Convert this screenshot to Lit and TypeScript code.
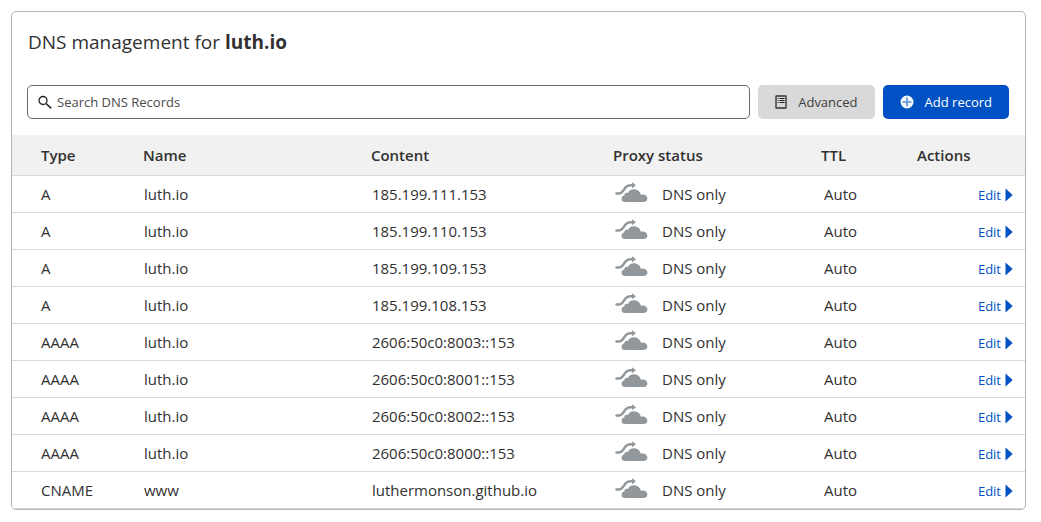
import { LitElement, html, css } from "lit";
import { customElement, property } from "lit/decorators.js";

interface DnsRecord {
  type: string;
  name: string;
  content: string;
}

const RECORDS: DnsRecord[] = [
  { type: "A", name: "luth.io", content: "185.199.111.153" },
  { type: "A", name: "luth.io", content: "185.199.110.153" },
  { type: "A", name: "luth.io", content: "185.199.109.153" },
  { type: "A", name: "luth.io", content: "185.199.108.153" },
  { type: "AAAA", name: "luth.io", content: "2606:50c0:8003::153" },
  { type: "AAAA", name: "luth.io", content: "2606:50c0:8001::153" },
  { type: "AAAA", name: "luth.io", content: "2606:50c0:8002::153" },
  { type: "AAAA", name: "luth.io", content: "2606:50c0:8000::153" },
  { type: "CNAME", name: "www", content: "luthermonson.github.io" },
];

const searchIcon = html`<svg class="search-icon" viewBox="0 0 14 14" width="14" height="14" aria-hidden="true">
  <circle cx="5" cy="5.5" r="4" fill="none" stroke="#222" stroke-width="1.3" />
  <path d="M8 8.5l5.2 4.8" stroke="#222" stroke-width="1.6" fill="none" />
</svg>`;

const listIcon = html`<svg viewBox="0 0 12 14" width="12" height="14" aria-hidden="true">
  <rect x="1" y="1" width="10" height="12" rx="0.6" fill="none" stroke="#5a5a5a" stroke-width="1.8" />
  <path d="M2.5 3.5h1M4.5 3.5h5M2.5 5.5h1M4.5 5.5h5M2.5 7.5h1M4.5 7.5h5" stroke="#222" stroke-width="1" />
</svg>`;

const plusIcon = html`<svg viewBox="0 0 14 14" width="14" height="14" aria-hidden="true">
  <circle cx="7" cy="7" r="6.5" fill="#f4f7fc" />
  <path d="M7 2.5v9M2.5 7h9" stroke="#5a8ed8" stroke-width="1.6" />
</svg>`;

const cloudIcon = html`<svg viewBox="0 0 33 21" width="33" height="21" aria-hidden="true">
  <path
    d="M1.5 11.5H4C6 11.5 6.800 10.600 8 9L10.500 5.600C12 3.700 13 3.200 15 3.200H17.5"
    fill="none" stroke="#92979b" stroke-width="2.5" stroke-linecap="round" />
  <path d="M17 0.2L21 3.2L17 6.2Z" fill="#92979b" />
  <path
    d="M10 20C7.7 20 6.6 18.7 6.6 16.9C6.6 15 7.700 13.800 9.300 13.600C9.300 11.300 11 10.300 12.900 11C13.700 8.600 16 7.200 18.700 7.200C22.500 7.200 25.300 9.500 25.800 12.800C26.400 12.600 27 12.500 27.700 12.500C30.500 12.500 32.400 14.200 32.400 16.500C32.400 18.700 30.800 20 28.500 20Z"
    fill="#92979b" />
</svg>`;

const arrowIcon = html`<svg viewBox="0 0 8 14" width="8" height="14" aria-hidden="true">
  <path d="M0.5 0.5L7.7 7L0.5 13.5Z" fill="#0051c3" />
</svg>`;

@customElement("dns-records-table")
export class DnsRecordsTable extends LitElement {
  @property({ attribute: false }) records: DnsRecord[] = [];

  static styles = css`
    :host {
      display: block;
    }
    .records {
      width: 100%;
      table-layout: fixed;
      border-collapse: collapse;
      font-size: 15px;
      line-height: 20px;
      color: #313131;
    }
    .col-type {
      width: 119px;
    }
    .col-name {
      width: 22.5%;
    }
    .col-proxy {
      width: 208px;
    }
    .col-ttl {
      width: 96px;
    }
    .col-actions {
      width: 120px;
    }
    th {
      height: 40px;
      padding: 0 12px;
      background: #f1f1f1;
      font-weight: 600;
      text-align: left;
      white-space: nowrap;
    }
    td {
      height: 36px;
      padding: 0 12px 0 13px;
      border-top: 1px solid #d9d9d9;
      white-space: nowrap;
    }
    tbody tr:last-child td {
      border-bottom: 1px solid #d9d9d9;
    }
    th:first-child,
    td:first-child {
      padding-left: 29px;
    }
    .ttl {
      padding-left: 15px;
    }
    .proxy {
      display: flex;
      align-items: center;
      gap: 14px;
      padding-left: 1px;
    }
    .proxy svg {
      margin-bottom: 4px;
    }
    .actions {
      text-align: right;
    }
    .edit {
      display: inline-flex;
      align-items: center;
      gap: 4px;
      padding: 0;
      border: 0;
      background: none;
      color: #0051c3;
      font: inherit;
      font-size: 13px;
      cursor: pointer;
      vertical-align: middle;
    }
  `;

  render() {
    return html`
      <table class="records">
        <colgroup>
          <col class="col-type" />
          <col class="col-name" />
          <col />
          <col class="col-proxy" />
          <col class="col-ttl" />
          <col class="col-actions" />
        </colgroup>
        <thead>
          <tr>
            <th scope="col">Type</th>
            <th scope="col">Name</th>
            <th scope="col">Content</th>
            <th scope="col">Proxy status</th>
            <th scope="col">TTL</th>
            <th scope="col">Actions</th>
          </tr>
        </thead>
        <tbody>
          ${this.records.map(
            (r) => html`<tr>
              <td>${r.type}</td>
              <td>${r.name}</td>
              <td>${r.content}</td>
              <td><div class="proxy">${cloudIcon}<span>DNS only</span></div></td>
              <td class="ttl">Auto</td>
              <td class="actions">
                <button class="edit" type="button">Edit${arrowIcon}</button>
              </td>
            </tr>`
          )}
        </tbody>
      </table>
    `;
  }
}

@customElement("app-root")
export class AppRoot extends LitElement {
  static styles = css`
    :host {
      display: block;
      padding: 11px 15px 11px 11px;
      background: #fff;
      color: #313131;
      font-family: "Segoe UI", "Open Sans", "Noto Sans", sans-serif;
    }
    .card {
      border: 1px solid #b5b5b5;
      border-radius: 5px;
      overflow: hidden;
    }
    .title {
      margin: 0;
      padding: 16px 16px 29px;
      font-size: 19px;
      font-weight: 400;
      line-height: 28px;
    }
    .title strong {
      font-weight: 700;
    }
    .toolbar {
      display: flex;
      gap: 8px;
      padding: 0 16px 16px 15px;
    }
    .search {
      flex: 1;
      display: flex;
      align-items: center;
      gap: 5px;
      box-sizing: border-box;
      height: 34px;
      padding: 0 10px;
      border: 1px solid #6b6b6b;
      border-radius: 5px;
    }
    .search-input {
      flex: 1;
      min-width: 0;
      padding: 0;
      border: 0;
      outline: 0;
      background: none;
      color: inherit;
      font: inherit;
      font-size: 13px;
    }
    .search-input::placeholder {
      color: #4a4a4a;
      opacity: 1;
    }
    .button {
      display: flex;
      align-items: center;
      gap: 11px;
      height: 34px;
      padding: 0 17px;
      border: 0;
      border-radius: 5px;
      font: inherit;
      font-size: 13px;
      white-space: nowrap;
      cursor: pointer;
    }
    .secondary {
      background: #d9d9d9;
      color: #3d3d3d;
    }
    .primary {
      background: #0051c3;
      color: #fff;
    }
  `;

  render() {
    return html`
      <section class="card">
        <h1 class="title">DNS management for <strong>luth.io</strong></h1>
        <div class="toolbar">
          <label class="search">
            ${searchIcon}
            <input class="search-input" type="text" placeholder="Search DNS Records" aria-label="Search DNS Records" />
          </label>
          <button class="button secondary" type="button">${listIcon}<span>Advanced</span></button>
          <button class="button primary" type="button">${plusIcon}<span>Add record</span></button>
        </div>
        <dns-records-table .records=${RECORDS}></dns-records-table>
      </section>
    `;
  }
}
